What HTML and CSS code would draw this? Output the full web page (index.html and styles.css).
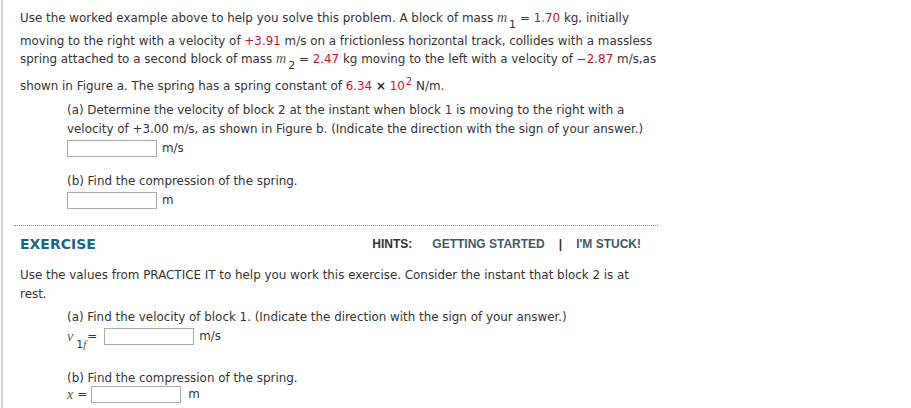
FILE: index.html
```html
<!DOCTYPE html>
<html>
<head>
<meta charset="utf-8">
<link rel="stylesheet" href="styles.css">
</head>
<body>
<div class="page">
  <p class="intro">Use the worked example above to help you solve this problem. A block of mass <span class="mv"><i>m</i><sub>1</sub></span> = <span class="red">1.70</span> kg, initially moving to the right with a velocity of <span class="red">+3.91</span> m/s on a frictionless horizontal track, collides with a massless spring attached to a second block of mass <span class="mv"><i>m</i><sub>2</sub></span> = <span class="red">2.47</span> kg moving to the left with a velocity of <span class="red">&minus;2.87</span> m/s,as shown in Figure a. The spring has a spring constant of <span class="red">6.34</span> <b class="times">&times;</b> <span class="red">10</span><span class="pow red">2</span> N/m.</p>

  <div class="part part-a">
    <div class="q">(a) Determine the velocity of block 2 at the instant when block 1 is moving to the right with a velocity of +3.00 m/s, as shown in Figure b. (Indicate the direction with the sign of your answer.)</div>
    <div class="ans"><span class="box"></span><span class="unit">m/s</span></div>
  </div>
  <div class="part part-b">
    <div class="q">(b) Find the compression of the spring.</div>
    <div class="ans"><span class="box"></span><span class="unit">m</span></div>
  </div>

  <div class="divider"></div>

  <div class="ex-head">
    <span class="ex-title">EXERCISE</span>
    <span class="hints"><b>HINTS:</b><span class="hint hint-first">GETTING STARTED</span><span class="sep">|</span><span class="hint hint-last">I'M STUCK!</span></span>
  </div>

  <p class="ex-text">Use the values from PRACTICE IT to help you work this exercise. Consider the instant that block 2 is at rest.</p>

  <div class="part part-ea">
    <div class="q">(a) Find the velocity of block 1. (Indicate the direction with the sign of your answer.)</div>
    <div class="ans"><span class="var var-v"><i>v</i><sub>1<i>f</i></sub></span><span class="eq">=</span><span class="box"></span><span class="unit">m/s</span></div>
  </div>
  <div class="part part-eb">
    <div class="q">(b) Find the compression of the spring.</div>
    <div class="ans"><span class="var var-x"><i>x</i></span><span class="eq eq-x">=</span><span class="box"></span><span class="unit unit-x">m</span></div>
  </div>
</div>
</body>
</html>
```
FILE: styles.css
```css
html, body {
  margin: 0;
  padding: 0;
  background: #fff;
}
body {
  font-family: "DejaVu Sans", Verdana, sans-serif;
  font-size: 11.9px;
  color: #333;
}
.page {
  border-left: 2px solid #d4d4d4;
  margin-left: 1px;
  min-height: 408px;
  padding: 9px 0 0 17px;
  box-sizing: border-box;
  width: 660px;
}
.intro {
  margin: 0;
  line-height: 18px;
}
.red { color: #c8102e; }
.times { color: #222; }
.mv {
  display: inline-block;
  margin-bottom: 5px;
}
.mv i, .var i {
  font-family: "Liberation Serif", "Times New Roman", serif;
  font-size: 14px;
  color: #555;
}
sub {
  font-size: 11px;
  vertical-align: -6px;
  line-height: 0;
  margin-left: 2px;
}
.pow {
  display: inline-block;
  font-size: 10px;
  vertical-align: 5px;
  line-height: 10px;
  margin-top: 4px;
  margin-left: 1px;
}
.part {
  margin-left: 47px;
  line-height: 19px;
}
.part-a { margin-top: 6px; }
.part-b { margin-top: 14px; }
.part-ea { margin-top: 4px; }
.part-eb { margin-top: 23px; }
.part-eb .ans { margin-top: -3px; }
.ans {
  display: flex;
  align-items: center;
  height: 19px;
}
.box {
  display: inline-block;
  width: 88px;
  height: 15px;
  border: 1px solid #a9a9a9;
  background: #fff;
}
.unit { margin-left: 5px; }
.unit-x { margin-left: 7px; }
.divider {
  border-top: 1px dotted #888;
  margin: 15px 0 0 -6px;
  width: 644px;
}
.ex-head {
  display: flex;
  justify-content: space-between;
  align-items: center;
  margin-top: 10px;
  width: 621px;
}
.ex-title {
  font-weight: bold;
  font-size: 14px;
  color: #1b6680;
}
.hints {
  font-family: "Liberation Sans", Arial, sans-serif;
  font-size: 12px;
  font-weight: bold;
  color: #333;
}
.hint { color: #3f5a66; }
.hint-first { margin-left: 20px; }
.hint-last { margin-left: 14px; }
.sep { margin-left: 14px; color: #333; }
.ex-text {
  margin: 14px 0 0;
  line-height: 19px;
  width: 625px;
}
.var {
  display: inline-block;
  line-height: 19px;
}
.var-v { margin-right: 1px; }
.var-v sub { vertical-align: -7px; margin-left: 3px; }
.var-x { margin-right: 4px; }
.var sub i { font-size: 11px; }
.eq { margin-right: 7px; }
.eq-x { margin-right: 4px; }
```
